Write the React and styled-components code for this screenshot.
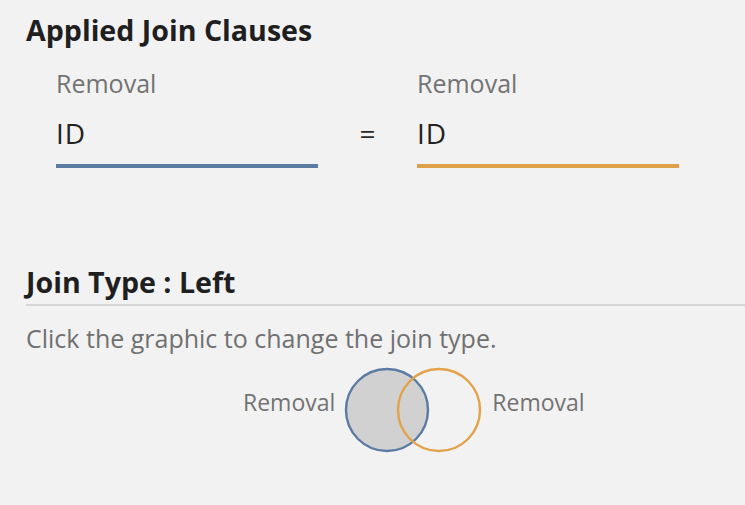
import React from 'react'
import styled, { createGlobalStyle } from 'styled-components'

const GlobalStyle = createGlobalStyle`
  html, body {
    margin: 0;
    padding: 0;
    background: #f2f2f2;
  }
  body {
    font-family: "Open Sans", "Noto Sans", sans-serif;
  }
`

const Page = styled.div`
  width: 745px;
  height: 505px;
  box-sizing: border-box;
  padding: 12px 0 0 26px;
  background: #f2f2f2;
  overflow: hidden;
`

const Heading = styled.h2`
  margin: 0;
  font-size: 28.6px;
  font-weight: 700;
  line-height: 36px;
  color: #1f1f1f;
`

const ClauseRow = styled.div`
  display: flex;
  align-items: flex-end;
  padding-left: 30px;
  margin-top: 20px;
`

const Field = styled.div`
  width: 262px;
  display: flex;
  flex-direction: column;
  & + & {
    width: 263px;
  }
`

const FieldLabel = styled.div`
  font-size: 25px;
  line-height: 30px;
  color: #737373;
`

const FieldValue = styled.div`
  font-size: 28px;
  line-height: 34px;
  letter-spacing: 1px;
  color: #222;
  margin-top: 18px;
  padding-bottom: 14px;
  border-bottom: 4px solid ${p => p.color};
`

const Equals = styled.div`
  width: 99px;
  text-align: center;
  font-size: 28px;
  line-height: 34px;
  color: #2a2a2a;
  padding-bottom: 18px;
`

const JoinSection = styled.div`
  margin-top: 96px;
`

const Divider = styled.div`
  height: 2px;
  background: #d6d6d6;
  margin-top: 4px;
`

const Hint = styled.p`
  margin: 17px 0 0;
  font-size: 25px;
  line-height: 30px;
  color: #707070;
`

const VennRow = styled.div`
  display: flex;
  align-items: center;
  margin-top: 12px;
  padding-left: 217px;
`

const VennLabel = styled.span`
  font-size: 23px;
  line-height: 28px;
  color: #737373;
  margin-bottom: 16px;
`

const VennGraphic = styled.svg`
  display: block;
  margin: 0 6px 0 9px;
  cursor: pointer;
`

function Venn() {
  return (
    <VennGraphic width="142" height="90" viewBox="0 0 142 90">
      <circle cx="43" cy="45" r="41" fill="#d1d1d1" stroke="#5b7ba3" strokeWidth="2.4" />
      <circle cx="95" cy="45" r="41" fill="none" stroke="#e2a24a" strokeWidth="2.4" />
    </VennGraphic>
  )
}

export default function App() {
  return (
    <>
      <GlobalStyle />
      <Page>
        <Heading>Applied Join Clauses</Heading>
        <ClauseRow>
          <Field>
            <FieldLabel>Removal</FieldLabel>
            <FieldValue color="#5b7ba3">ID</FieldValue>
          </Field>
          <Equals>=</Equals>
          <Field>
            <FieldLabel>Removal</FieldLabel>
            <FieldValue color="#dfa04a">ID</FieldValue>
          </Field>
        </ClauseRow>
        <JoinSection>
          <Heading>Join Type : Left</Heading>
          <Divider />
          <Hint>Click the graphic to change the join type.</Hint>
          <VennRow>
            <VennLabel>Removal</VennLabel>
            <Venn />
            <VennLabel>Removal</VennLabel>
          </VennRow>
        </JoinSection>
      </Page>
    </>
  )
}
